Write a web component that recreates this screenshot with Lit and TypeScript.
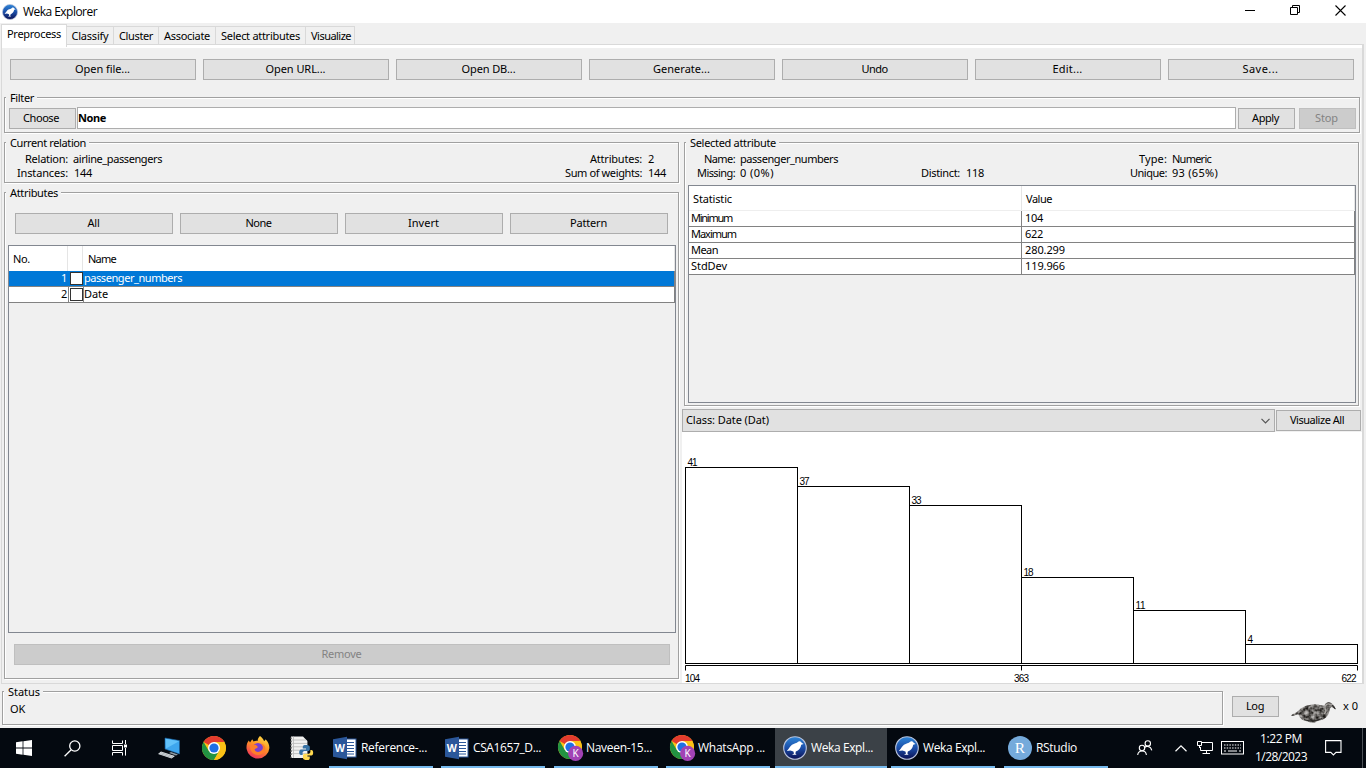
import { LitElement, html, svg, css } from "lit";
import { customElement, property } from "lit/decorators.js";
import { styleMap } from "lit/directives/style-map.js";
import { classMap } from "lit/directives/class-map.js";

/** A text run tracked so that it occupies exactly `w` pixels. */
@customElement("ui-text")
class UiText extends LitElement {
  static styles = css`
    :host { display: inline-block; white-space: pre; flex: none; }
  `;
  @property() t = "";
  @property({ type: Number }) w = 0;

  render() {
    return html`<span>${this.t}</span>`;
  }

  updated() {
    const span = this.renderRoot.querySelector("span") as HTMLElement;
    span.style.letterSpacing = "0px";
    const natural = span.getBoundingClientRect().width;
    if (this.w) span.style.letterSpacing = `${(this.w - natural) / this.t.length}px`;
  }
}

const T = (t: string, w: number) => html`<ui-text .t=${t} .w=${w}></ui-text>`;

const wekaIcon = (size: number) => html`
  <svg width=${size} height=${size} viewBox="0 0 24 24">
    <defs>
      <linearGradient id="wk" x1="0" y1="0" x2="0" y2="1">
        <stop offset="0" stop-color="#2e86d8" />
        <stop offset="0.5" stop-color="#1b4ea8" />
        <stop offset="1" stop-color="#0a0f52" />
      </linearGradient>
    </defs>
    <circle cx="12" cy="12" r="11.3" fill="url(#wk)" stroke="#b9c3dc" stroke-width="1.1" />
    <path d="M20.6 8 18.6 6.8C18 5.2 16 4.8 14.8 6 14 7.2 11 7.4 9 8.8 7 10.4 6.6 12 3.8 15L7.4 14.4 10.4 15.4 11 17.4 9 18.8H13.6L12.4 17.6 12.8 15.6C15.8 14.6 17.8 12 18.2 8.8Z" fill="#fff" />
  </svg>`;

const chromeShapes = svg`
  <circle cx="12" cy="12" r="12" fill="#fbc116" />
  <path d="M12 12 1.6 6A12 12 0 0 1 22.4 6H12Z" fill="#e33b2e" />
  <path d="M1.6 6A12 12 0 0 0 12 24L17.2 15 12 12 6.8 15Z" fill="#229342" />
  <path d="M12 6.2H22.4A12 12 0 0 1 12 24L17.2 15Z" fill="#fbc116" />
  <circle cx="12" cy="12" r="6" fill="#fff" />
  <circle cx="12" cy="12" r="4.6" fill="#1f6fe5" />`;

const chromeIcon = html`<svg width="24" height="24" viewBox="0 0 24 24">${chromeShapes}</svg>`;

const chromeProfileIcon = html`
  <svg width="24" height="26" viewBox="0 0 24 26" overflow="visible">
    ${chromeShapes}
    <circle cx="17.6" cy="18.4" r="7.6" fill="#a142b5" />
    <text x="17.6" y="22" text-anchor="middle" font-family="Noto Sans" font-size="10" fill="#fff">K</text>
  </svg>`;

const wordIcon = html`
  <svg width="24" height="24" viewBox="0 0 24 24">
    <rect x="11" y="3" width="12" height="18" fill="#fff" stroke="#2b579a" />
    <path d="M14 6.5h7M14 9.5h7M14 12.5h7M14 15.5h7M14 18h7" stroke="#2b579a" />
    <path d="M0 3.2 14 .8V23.2L0 20.8Z" fill="#2b579a" />
    <text x="6.8" y="16" text-anchor="middle" font-family="Open Sans" font-weight="700" font-size="10.5" fill="#fff">W</text>
  </svg>`;

const rIcon = html`
  <svg width="24" height="24" viewBox="0 0 24 24">
    <circle cx="12" cy="12" r="12" fill="#75aadb" />
    <text x="12" y="17" text-anchor="middle" font-family="Liberation Serif" font-size="15.5" fill="#fff">R</text>
  </svg>`;

const startIcon = html`
  <svg width="16" height="16" viewBox="0 0 16 16" fill="#fff">
    <path d="M0 2.2 6.6 1.3V7.6H0ZM7.4 1.2 16 0V7.6H7.4ZM0 8.4H6.6V14.7L0 13.8ZM7.4 8.4H16V16L7.4 14.8Z" />
  </svg>`;

const searchIcon = html`
  <svg width="17" height="17" viewBox="0 0 17 17" fill="none" stroke="#fff" stroke-width="1.3">
    <circle cx="10.8" cy="6" r="5.1" /><path d="M7.2 9.8 .6 16.2" />
  </svg>`;

const taskViewIcon = html`
  <svg width="17" height="16" viewBox="0 0 17 16" fill="none" stroke="#fff">
    <path d="M1.5 .5V3.5H11.5V.5M1.5 15.5V12.5H11.5V15.5M1.5 5.5H11.5V10.5H1.5Z" />
    <path d="M14.5 0V4M14.5 8V15.6" /><path d="M13 6H16" stroke-width="3" />
  </svg>`;

const pcIcon = html`
  <svg width="24" height="24" viewBox="0 0 24 24">
    <path d="M7 2 21.5 4.6V18L7 13Z" fill="#3ea6ee" stroke="#1b5f9c" stroke-width=".6" />
    <path d="M7.6 2.8 21 5.2 8 12.4Z" fill="#62c2fa" />
    <path d="M13 16 20 18.4 18 19.6 11 17Z" fill="#8d9aa5" />
    <path d="M3 15.4 17 20 13.6 22.6 0 18Z" fill="#dfe3e6" />
    <path d="M3 16.6 15 20.6M1.6 17.6 13.8 21.6" stroke="#9aa2a8" stroke-width=".7" />
  </svg>`;

const firefoxIcon = html`
  <svg width="24" height="24" viewBox="0 0 24 24">
    <defs>
      <linearGradient id="ff" x1=".8" y1="0" x2=".3" y2="1">
        <stop offset="0" stop-color="#ffe14a" />
        <stop offset=".45" stop-color="#ff9422" />
        <stop offset="1" stop-color="#f0305e" />
      </linearGradient>
    </defs>
    <path d="M14 0C15.6 1.4 17.4 3 18 5 19 4.8 19.4 4 19.4 3.2 22 5.4 23.4 8.6 23.4 12A11.5 11.5 0 0 1 .6 13C.2 9.6 1 6.4 2.8 4.4L4 6.4 6.2 3.2 7.6 5.6C9 4.6 10.6 4.6 11.6 5 11.6 3 12.6 1.2 14 0Z" fill="url(#ff)" />
    <circle cx="12" cy="12.4" r="5.4" fill="#7a3fd0" />
    <path d="M4 10C7 7.6 9.8 8.6 11.6 10.4 12.4 12 9.4 11.8 8.6 13.6 9 16.4 14 17 16.4 13.6 17.6 11 16.4 8.6 14.4 7.6 18.6 7.8 20 11.6 19 14.6 17.4 19 11.4 20.4 7.4 17.6 4.8 15.6 4 12.8 4 10Z" fill="#ff7e2a" />
  </svg>`;

const pythonIcon = html`
  <svg width="24" height="24" viewBox="0 0 24 24">
    <path d="M1 .6H13L17.4 5V22H1Z" fill="#f1f1f1" />
    <path d="M3.5 .6V22M1 4H16M1 7.4H17M1 10.8H17M1 14.2H17M1 17.6H17" stroke="#bdbdbd" stroke-width=".9" />
    <path d="M1 1.5V22" stroke="#555" stroke-dasharray="1.6 1.6" stroke-width="1.4" />
    <path d="M15.6 9C12.6 9 12.8 10.2 12.8 12.6H16V13.4H11C8.6 13.4 8.6 19 11 19H12.6V17C12.6 15.6 13.8 15 15 15H18C19 15 19.8 14.4 19.8 13V11C19.8 9.4 18 9 15.6 9Z" fill="#3873a6" />
    <path d="M17 24C20 24 19.8 22.8 19.8 20.4H16.6V19.6H21.4C23.8 19.6 23.8 14 21.4 14H20.4V15.4C20.4 17 19.4 17.8 18 17.8H15C13.6 17.8 13 18.6 13 19.8V22C13 23.4 14.6 24 17 24Z" fill="#ffd94f" />
  </svg>`;

const birdIcon = html`
  <svg width="46" height="23" viewBox="0 0 46 23">
    <defs>
      <filter id="feather" x="0" y="0" width="1" height="1" color-interpolation-filters="sRGB">
        <feTurbulence type="fractalNoise" baseFrequency=".28" numOctaves="2" seed="4" />
        <feColorMatrix values="1.1 0 0 0 -.14  1.1 0 0 0 -.15  1.1 0 0 0 -.16  0 0 0 0 1" />
        <feComposite in2="SourceGraphic" operator="in" />
      </filter>
    </defs>
    <path d="M0 14.4C2 12.4 4 12.2 6 11 8 9.4 9 8 11.4 6.6 14 4.4 19 3.6 24 3.2 28 3 30.6 5 33.4 4.4 34.4 1.4 38 .6 40.2 2 42.6 3.2 43.8 6 45 8.6 43 7.8 41.6 6.2 40.2 6 38.6 7.4 38.6 10 37.8 12.4 36.4 16.6 31.6 19.2 27 19.8L24 21.6H19L17 20.6C13.6 20.2 10.6 19 9.4 16.8 7.4 15.4 8.6 13.6 6.4 13.6 4 14 3 15.4 0 14.4Z" fill="#656361" filter="url(#feather)" />
    <path d="M13 18.6C18 20.8 25 20 31 17.4M41 4.2 44.4 8" stroke="#2c2a29" stroke-width="1.1" fill="none" />
    <path d="M35 4C36.4 2.4 38.6 2.4 39.6 4M34 7.6C35.4 9.4 34.6 11.6 33 13" stroke="#a9a6a2" stroke-width="1.3" fill="none" />
  </svg>`;

@customElement("app-root")
class AppRoot extends LitElement {
  static styles = css`
    :host {
      display: flex; flex-direction: column; width: 1366px; height: 768px; overflow: hidden;
      background: #f0f0f0; color: #000; font: 11px/14px "Noto Sans", sans-serif;
    }
    * { box-sizing: border-box; }
    svg { display: block; flex: none; }
    .title { height: 23px; background: #fff; display: flex; align-items: center; padding-left: 2px; font: 12px/16px "Open Sans", sans-serif; flex: none; }
    .title .name { margin-left: 5px; display: flex; flex: 1; padding-top: 1px; }
    .winbtns { display: flex; align-items: center; margin: -3px 20px 0 0; gap: 35px; }

    .tabs { height: 21px; display: flex; align-items: flex-end; padding: 0 0 0 1px; position: relative; z-index: 1; flex: none; }
    .tab { height: 18px; border: 1px solid #d9d9d9; border-width: 1px 1px 0 0; display: flex; justify-content: center; align-items: center; }
    .tab:last-child { padding-left: 2px; }
    .tab.on { height: 23px; background: #fff; border-width: 1px 1px 0 1px; margin: 0 0 -3px; padding: 0 0 4px; }

    .panel { height: 640px; margin: 0 2px 0 1px; border: 1px solid #d9d9d9; border-right-width: 2px; display: flex; flex-direction: column; flex: none; }
    .strip { height: 3px; background: #fff; flex: none; }
    .btn { height: 21px; background: #e1e1e1; border: 1px solid #adadad; display: flex; align-items: center; justify-content: center; padding: 0 1px 2px 0; }
    .btn.off { background: #ccc; border-color: #bfbfbf; color: #838383; }
    .files { display: grid; grid-template-columns: repeat(7, 186px); gap: 7px; padding: 11px 0 0 8px; height: 49px; flex: none; }

    .group { position: relative; border: 1px solid #a0a0a0; box-shadow: inset 1px 1px #fff, 1px 1px #fff; }
    .legend { position: absolute; top: -7px; left: 1px; padding: 0 3px 0 4px; background: #f0f0f0; }
    .filter { margin: 0 2px 9px 2px; width: 1356px; height: 36px; display: flex; align-items: flex-end; padding: 0 3px 3px 4px; flex: none; }
    .choose { width: 67px; padding-right: 3px; }
    .value { width: 1159px; height: 22px; background: #fff; border: 1px solid #adadad; margin: 0 2px 0 1px; padding-left: 0; display: flex; align-items: center; font-weight: 700; }
    .apply { width: 57px; padding-right: 2px; }
    .stop { width: 57px; margin-left: 4px; padding-right: 2px; }

    .split { display: grid; grid-template-columns: 675px 682px; padding-left: 2px; height: 541px; column-gap: 3px; }
    .left { display: flex; flex-direction: column; gap: 9px; }
    .relation { height: 41px; display: grid; grid-template-columns: 63px 497px 77px 30px; grid-template-rows: 14px 14px; padding-top: 9px; column-gap: 0; }
    .r { display: flex; justify-content: flex-end; }
    .l { display: flex; padding-left: 5px; }
    .l.n { padding-left: 6px; }
    .attributes { height: 487px; display: flex; flex-direction: column; padding: 20px 3px 0 3px; }
    .picks { display: grid; grid-template-columns: repeat(4, 158px); gap: 7px; padding-left: 7px; margin: 0 0 11px 0; }
    .table { border: 1px solid #828790; display: flex; flex-direction: column; }
    .attrs { width: 668px; height: 388px; }
    .row { display: grid; height: 16px; background: #fff; border-bottom: 1px solid #828282; border-right: 1px solid #828282; line-height: 14px; }
    .attrs .row { grid-template-columns: 60px 15px 1fr; }
    .row.sel { background: #0078d7; color: #fff; }
    .cell { display: flex; align-items: flex-start; border-right: 1px solid #828282; height: 15px; }
    .sel .cell { border-color: #0078d7; }
    .cell.num { justify-content: flex-end; padding-right: 1px; }
    .cell.last { border-right: 0; }
    .check { width: 13px; height: 13px; border: 1px solid #333; background: #fff; margin: 1px 0 0 1px; flex: none; }
    .head { display: grid; height: 25px; background: #fff; }
    .attrs .head { grid-template-columns: 59px 15px 1fr; }
    .head .h { display: flex; align-items: center; border-right: 1px solid #e5e5e5; padding: 1px 0 0 4px; }
    .attrs .h { padding-left: 4px; }
    .attrs .h:last-child { padding-left: 5px; }
    .remove { width: 656px; margin: 11px 0 0 6px; }

    .right { display: flex; flex-direction: column; }
    .selected { width: 675px; height: 264px; margin-left: 2px; padding: 9px 3px 0 3px; display: flex; flex-direction: column; gap: 5px; }
    .facts { display: grid; grid-template-columns: 47px 180px 45px 163px 44px 1fr; grid-template-rows: 14px 14px; }
    .stats { width: 668px; height: 218px; }
    .stats .head { grid-template-columns: 333px 1fr; border-bottom: 1px solid #eee; }
    .stats .row { grid-template-columns: 333px 1fr; }
    .stats .cell { padding-left: 2px; }
    .stats .cell.last { padding-left: 3px; }
    .bar { display: flex; height: 23px; margin-top: 3px; gap: 1px; align-items: center; flex: none; }
    .combo { width: 593px; height: 23px; background: #e1e1e1; border: 1px solid #adadad; display: flex; align-items: center; justify-content: space-between; padding: 0 4px 0 3px; }
    .combo ui-text { margin-top: -2px; }
    .visall { width: 85px; padding-right: 3px; }
    .chart { background: #fff; width: 680px; height: 251px; }

    .foot { display: flex; height: 44px; padding: 7px 0 0 2px; flex: none; align-items: flex-start; }
    .status { width: 1221px; height: 34px; padding: 10px 0 0 7px; }
    .log { width: 47px; margin: 5px 12px 0 9px; }
    .bird { margin-top: 10px; }
    .count { margin: 8px 0 0 6px; }

    .taskbar { height: 40px; background: #040910; display: flex; align-items: stretch; color: #fff; font: 12px/18px "Open Sans", sans-serif; flex: none; }
    .pins { display: flex; align-items: center; padding-left: 16px; width: 329px; flex: none; }
    .task { width: 104px; display: flex; align-items: center; gap: 4px; padding-left: 4px; border-bottom: 2px solid #76b9ed; padding-top: 1px; flex: none; }
    .task.on { width: 112px; background: #3b4147; padding-left: 8px; }
    .tray { display: flex; align-items: center; padding-left: 29px; }
    .clock { display: flex; flex-direction: column; align-items: center; width: 54px; margin: 0 17px 0 10px; }
    .peek { border-left: 1px solid #4b5056; margin-left: 20px; align-self: stretch; width: 5px; }
  `;

  private tabs: [string, number, number][] = [
    ["Preprocess", 54, 66], ["Classify", 37, 47], ["Cluster", 34, 45],
    ["Associate", 46, 57], ["Select attributes", 79, 90], ["Visualize", 40, 49],
  ];
  private files: [string, number][] = [
    ["Open file...", 55], ["Open URL...", 60], ["Open DB...", 54], ["Generate...", 57],
    ["Undo", 26], ["Edit...", 30], ["Save...", 36],
  ];
  private picks: [string, number][] = [["All", 12], ["None", 26], ["Invert", 31], ["Pattern", 37]];
  private stats: [string, number, string, number][] = [
    ["Minimum", 41, "104", 18], ["Maximum", 45, "622", 18], ["Mean", 27, "280.299", 40], ["StdDev", 36, "119.966", 40],
  ];
  /* bin count, top edge of its bar */
  private bins: [number, number][] = [[41, 35], [37, 54], [33, 73], [18, 145], [11, 178], [4, 212]];
  private tasks: { icon: unknown; t: string; w: number; gap: number; on?: boolean }[] = [
    { icon: wordIcon, t: "Reference-...", w: 66, gap: 0 },
    { icon: wordIcon, t: "CSA1657_D...", w: 68, gap: 8 },
    { icon: chromeProfileIcon, t: "Naveen-15...", w: 66, gap: 9 },
    { icon: chromeProfileIcon, t: "WhatsApp ...", w: 67, gap: 8 },
    { icon: wekaIcon(24), t: "Weka Expl...", w: 62, gap: 5, on: true },
    { icon: wekaIcon(24), t: "Weka Expl...", w: 62, gap: 4 },
    { icon: rIcon, t: "RStudio", w: 41, gap: 9 },
  ];

  private chart() {
    const label = (x: number, y: number, t: string, w: number) =>
      svg`<text x=${x} y=${y} textLength=${w} font-family="Liberation Sans" font-size="10">${t}</text>`;
    return html`
      <svg class="chart" viewBox="0 0 680 251">
        ${this.bins.map(([n, y], i) => svg`
          <rect x=${3.5 + i * 112} y=${y + 0.5} width="112" height=${231 - y} fill="none" stroke="#000" />
          ${label(5.5 + i * 112, y - 1, String(n), n > 9 ? 10 : 5)}`)}
        <path d="M3.5 238.5V233.5H675.5V238.5M339.5 233.5V238.5" fill="none" stroke="#000" />
        ${label(3, 250, "104", 15)}${label(332, 250, "363", 15)}${label(659.5, 250, "622", 15)}
      </svg>`;
  }

  render() {
    return html`
      <div class="title">
        ${wekaIcon(16)}<div class="name">${T("Weka Explorer", 74)}</div>
        <div class="winbtns">
          <svg width="10" height="11" viewBox="0 0 10 11"><path d="M0 5.5H10" stroke="#000" /></svg>
          <svg width="10" height="10" viewBox="0 0 10 10" fill="none" stroke="#000"><path d="M.5 2.5H7.5V9.5H.5ZM2.5 2V.5H9.5V7.5H8" /></svg>
          <svg width="11" height="11" viewBox="0 0 11 11" stroke="#000" stroke-width="1.1"><path d="M.5 .5 10.5 10.5M10.5 .5 .5 10.5" /></svg>
        </div>
      </div>

      <div class="tabs">
        ${this.tabs.map(([t, w, box], i) => html`<div class=${classMap({ tab: true, on: i === 0 })} style=${styleMap({ width: `${box}px` })}>${T(t, w)}</div>`)}
      </div>

      <div class="panel">
        <div class="strip"></div>
        <div class="files">${this.files.map(([t, w]) => html`<div class="btn">${T(t, w)}</div>`)}</div>

        <div class="group filter">
          <div class="legend">${T("Filter", 24)}</div>
          <div class="btn choose">${T("Choose", 36)}</div>
          <div class="value">${T("None", 28)}</div>
          <div class="btn apply">${T("Apply", 27)}</div>
          <div class="btn off stop">${T("Stop", 23)}</div>
        </div>

        <div class="split">
          <div class="left">
            <div class="group relation">
              <div class="legend">${T("Current relation", 76)}</div>
              <div class="r">${T("Relation:", 43)}</div><div class="l">${T("airline_passengers", 89)}</div>
              <div class="r">${T("Attributes:", 52)}</div><div class="l n">${T("2", 6)}</div>
              <div class="r">${T("Instances:", 51)}</div><div class="l n">${T("144", 18)}</div>
              <div class="r">${T("Sum of weights:", 77)}</div><div class="l n">${T("144", 18)}</div>
            </div>

            <div class="group attributes">
              <div class="legend">${T("Attributes", 48)}</div>
              <div class="picks">${this.picks.map(([t, w]) => html`<div class="btn">${T(t, w)}</div>`)}</div>
              <div class="table attrs">
                <div class="head">
                  <div class="h">${T("No.", 17)}</div><div class="h"></div><div class="h">${T("Name", 28)}</div>
                </div>
                <div class="row sel">
                  <div class="cell num">${T("1", 6)}</div><div class="cell"><div class="check"></div></div>
                  <div class="cell last">${T("passenger_numbers", 98)}</div>
                </div>
                <div class="row">
                  <div class="cell num">${T("2", 6)}</div><div class="cell"><div class="check"></div></div>
                  <div class="cell last">${T("Date", 24)}</div>
                </div>
              </div>
              <div class="btn off remove">${T("Remove", 40)}</div>
            </div>
          </div>

          <div class="right">
            <div class="group selected">
              <div class="legend">${T("Selected attribute", 86)}</div>
              <div class="facts">
                <div class="r">${T("Name:", 31)}</div><div class="l">${T("passenger_numbers", 98)}</div>
                <div></div><div></div>
                <div class="r">${T("Type:", 28)}</div><div class="l">${T("Numeric", 39)}</div>
                <div class="r">${T("Missing:", 38)}</div><div class="l">${T("0 (0%)", 34)}</div>
                <div class="r">${T("Distinct:", 39)}</div><div class="l n">${T("118", 18)}</div>
                <div class="r">${T("Unique:", 37)}</div><div class="l">${T("93 (65%)", 46)}</div>
              </div>
              <div class="table stats">
                <div class="head"><div class="h">${T("Statistic", 39)}</div><div class="h">${T("Value", 26)}</div></div>
                ${this.stats.map(([k, kw, v, vw]) => html`
                  <div class="row"><div class="cell">${T(k, kw)}</div><div class="cell last">${T(v, vw)}</div></div>`)}
              </div>
            </div>
            <div class="bar">
              <div class="combo">
                ${T("Class: Date (Dat)", 83)}
                <svg width="9" height="6" viewBox="0 0 9 6" fill="none" stroke="#555" stroke-width="1.2"><path d="M.5 .8 4.5 4.8 8.5 .8" /></svg>
              </div>
              <div class="btn visall">${T("Visualize All", 54)}</div>
            </div>
            ${this.chart()}
          </div>
        </div>
      </div>

      <div class="foot">
        <div class="group status"><div class="legend">${T("Status", 32)}</div>${T("OK", 15)}</div>
        <div class="btn log">${T("Log", 18)}</div>
        <div class="bird">${birdIcon}</div>
        <div class="count">${T("x 0", 15)}</div>
      </div>

      <div class="taskbar">
        <div class="pins">
          <div style=${styleMap({ width: "48px" })}>${startIcon}</div>
          <div style=${styleMap({ width: "47px" })}>${searchIcon}</div>
          <div style=${styleMap({ width: "47px" })}>${taskViewIcon}</div>
          <div style=${styleMap({ width: "44px" })}>${pcIcon}</div>
          <div style=${styleMap({ width: "44px" })}>${chromeIcon}</div>
          <div style=${styleMap({ width: "44px" })}>${firefoxIcon}</div>
          ${pythonIcon}
        </div>
        ${this.tasks.map((k) => html`
          <div class=${classMap({ task: true, on: !!k.on })} style=${styleMap({ marginLeft: `${k.gap}px` })}>${k.icon}${T(k.t, k.w)}</div>`)}
        <div class="tray">
          <svg width="16" height="16" viewBox="0 0 16 16" fill="none" stroke="#fff" stroke-width="1.1">
            <circle cx="10.8" cy="3.4" r="2.7" /><path d="M7.4 8.2C8.4 5.6 13.6 5.4 14.8 10.4" />
            <circle cx="5" cy="8" r="2.7" /><path d="M.7 15C1.2 9.8 8.8 9.6 9.4 15" />
          </svg>
          <svg width="12" height="7" viewBox="0 0 12 7" fill="none" stroke="#fff" stroke-width="1.2" style=${styleMap({ marginLeft: "22px" })}><path d="M.5 6.3 6 .9 11.5 6.3" /></svg>
          <svg width="16" height="14" viewBox="0 0 16 14" fill="none" stroke="#fff" style=${styleMap({ marginLeft: "10px" })}>
            <path d="M5 1.5H15.5V9.5H3.5V6M9.5 9.5V12.5M5.5 12.5H13M.5 .5H4.5V4.5H.5ZM2.5 4.5V7" />
          </svg>
          <svg width="23" height="14" viewBox="0 0 23 14" fill="none" stroke="#fff" style=${styleMap({ marginLeft: "8px" })}>
            <rect x=".5" y=".5" width="22" height="12.5" /><path d="M3 4H20M3 7H20" stroke-dasharray="1.5 1.2" /><path d="M3 10H5M7 10H16M18 10H20" />
          </svg>
          <div class="clock">${T("1:22 PM", 42)}${T("1/28/2023", 52)}</div>
          <svg width="17" height="16" viewBox="0 0 17 16" fill="none" stroke="#fff" stroke-width="1.1"><path d="M.6 .6H16V12.4H11L8.4 15 5.8 12.4H.6Z" /></svg>
          <div class="peek"></div>
        </div>
      </div>`;
  }
}
